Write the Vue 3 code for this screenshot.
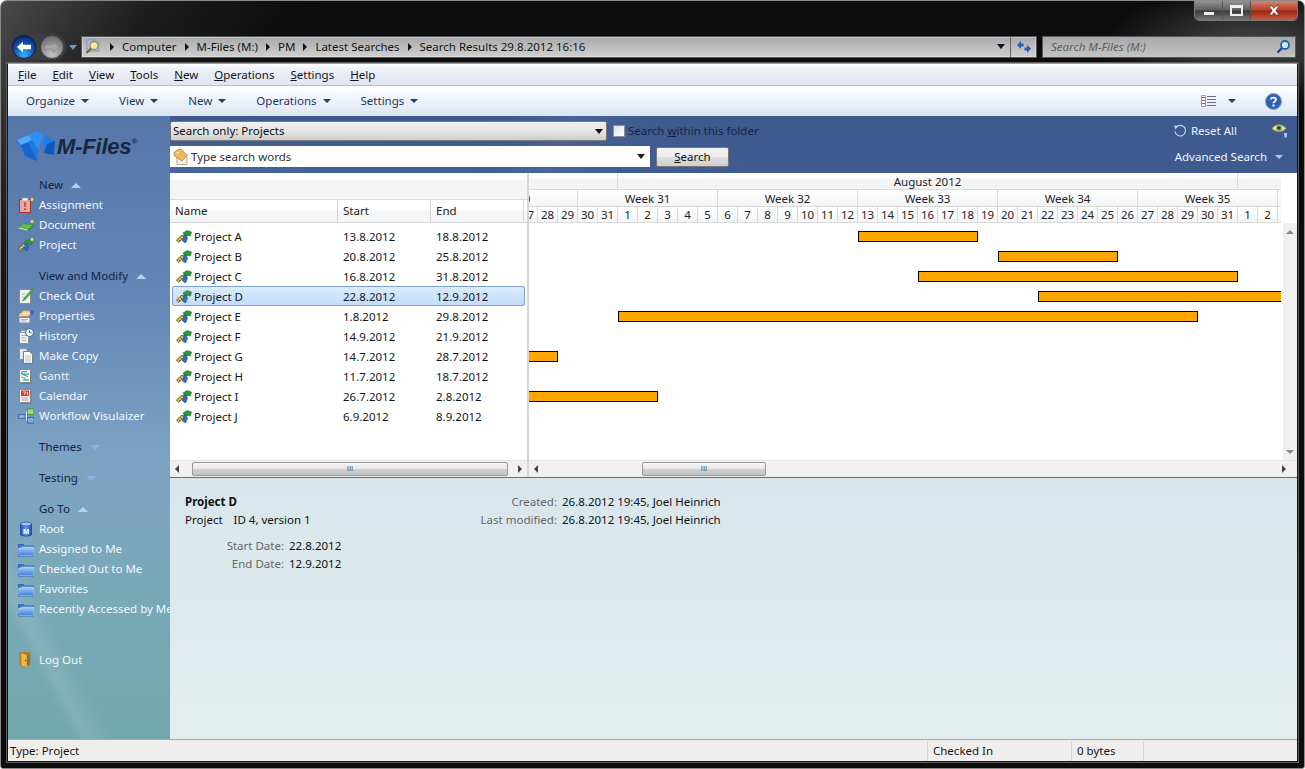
<template>
  <div class="frame">
    <svg class="defs" width="0" height="0">
      <defs>
        <linearGradient id="g-folder" x1="0" y1="0" x2="0" y2="1"><stop offset="0" stop-color="#a9cdf8" /><stop offset="1" stop-color="#3f80dc" /></linearGradient>
        <linearGradient id="g-db" x1="0" y1="0" x2="1" y2="0"><stop offset="0" stop-color="#1f55c8" /><stop offset=".5" stop-color="#6a9af0" /><stop offset="1" stop-color="#1c4cb8" /></linearGradient>
        <radialGradient id="g-back" cx=".5" cy=".85" r=".8"><stop offset="0" stop-color="#37b4f5" /><stop offset=".6" stop-color="#0d4fb0" /><stop offset="1" stop-color="#0a2e74" /></radialGradient>
        <radialGradient id="g-fwd" cx=".5" cy=".85" r=".8"><stop offset="0" stop-color="#c4c4c4" /><stop offset="1" stop-color="#6e6e6e" /></radialGradient>
      </defs>
      <symbol id="i-project" viewBox="0 0 16 16">
        <path d="M7 4 11 1.500 15.500 3 14.500 7 11 6.500 9 8Z" fill="#2f9a3a" stroke="#1a5f26" stroke-width=".5" />
        <path d="M5.500 7.500 10 5.500 11.500 9.500 9.500 14 6.500 12Z" fill="#2c6bd8" stroke="#173e8c" stroke-width=".5" />
        <path d="M.500 11 6 6 8 8.500 2.500 13.500Z" fill="#e9cd3c" stroke="#3c3c28" stroke-width=".7" />
        <path d="M2.500 10.500 4 12M4.500 8.500 6 10" stroke="#333" stroke-width=".8" />
      </symbol>
      <symbol id="i-assignment" viewBox="0 0 16 16">
        <rect x="1.500" y="2.500" width="11" height="13" fill="#e8a7a0" stroke="#a8322c" />
        <rect x="4" y="1" width="6" height="3" fill="#f4f4f4" stroke="#888" stroke-width=".5" />
        <path d="M6.200 5.500h1.600l-.3 4.500h-1zM6.200 11.500h1.600v1.600h-1.600z" fill="#c3201c" />
        <path d="M14 0l.8 1.700 1.200.3-1.200.9.300 1.600-1.100-1-1.400 1 .4-1.600-1-.9 1.400-.3z" fill="#ffe24a" />
      </symbol>
      <symbol id="i-document" viewBox="0 0 16 16">
        <path d="M.500 10 6 6.500 16 8 10 12.500Z" fill="#5cc04f" stroke="#2d7a2d" stroke-width=".5" />
        <path d="M.500 10 10 12.500 10 14 .500 11.500Z" fill="#eef5e8" stroke="#4b8d45" stroke-width=".5" />
        <path d="M10 12.500 16 8V9.500L10 14Z" fill="#2f8a35" />
        <path d="M14 2l.8 1.700 1.200.3-1.200.9.300 1.600-1.100-1-1.400 1 .4-1.600-1-.9 1.400-.3z" fill="#ffe24a" />
      </symbol>
      <symbol id="i-new-project" viewBox="0 0 16 16">
        <use href="#i-project" width="15" height="15" y="1" />
        <path d="M14 0l.8 1.700 1.200.3-1.200.9.300 1.600-1.100-1-1.400 1 .4-1.600-1-.9 1.400-.3z" fill="#ffe24a" />
      </symbol>
      <symbol id="i-checkout" viewBox="0 0 16 16">
        <path d="M1.500 1.500h11v14h-11z" fill="#f3f3ee" stroke="#8c8c8c" />
        <path d="M14.500 .5 6 10l-1.500 3 3-1.500L15.500 2Z" fill="#58b546" stroke="#2c7d2a" stroke-width=".5" />
        <path d="M4 6h3M4 9h1.500" stroke="#aaa" />
      </symbol>
      <symbol id="i-properties" viewBox="0 0 16 16">
        <path d="M1 9.500h11v5.500H1z" fill="#eef2f6" stroke="#7e8da0" />
        <path d="M3 11.500h7M3 13h5" stroke="#8da0b5" stroke-width=".8" />
        <path d="M1 6.500 6 2.500l6 .5 1 3-3 2.500H4.500L1 9Z" fill="#f2d9a0" stroke="#a48748" stroke-width=".6" />
        <path d="M12 2.500h3.500v4h-3z" fill="#2f66c8" />
      </symbol>
      <symbol id="i-history" viewBox="0 0 16 16">
        <path d="M1.500 4.500h9v11h-9z" fill="#f4f5f7" stroke="#8a8f98" />
        <path d="M3 2.500h6v2H3z" fill="#d8dce2" stroke="#8a8f98" stroke-width=".5" />
        <path d="M3.500 7.500h5M3.500 10h5M3.500 12.500h5" stroke="#a5a9b0" />
        <circle cx="11.500" cy="4.500" r="4" fill="#f6fbff" stroke="#3d638f" />
        <path d="M11.500 2.300v2.400h2" stroke="#3d638f" fill="none" />
      </symbol>
      <symbol id="i-copy" viewBox="0 0 16 16">
        <path d="M1.500 .5h6l2 2v9h-8z" fill="#e6e8eb" stroke="#8e9196" />
        <path d="M5.500 3.500h6l3 3v9h-9z" fill="#fbfbfb" stroke="#7a7d82" />
        <path d="M7 8h6M7 10h6M7 12h6M7 14h6" stroke="#a7a9ad" stroke-width=".7" />
      </symbol>
      <symbol id="i-gantt" viewBox="0 0 16 16">
        <path d="M1.500 1.500h11v13h-11z" fill="#f6f7f4" stroke="#8a8f8c" />
        <path d="M3 4 9 3.500M4 6.500 11 6M3 9l5 1.500M5 12h6" stroke="#5cb5a0" stroke-width="1.300" />
        <path d="M3 5.200 7 7.500 10 8.500" stroke="#3f7fd0" fill="none" />
        <path d="M13 3v12.500H3" stroke="#7b7e7b" fill="none" />
      </symbol>
      <symbol id="i-calendar" viewBox="0 0 16 16">
        <path d="M1.500 1.500h11v13h-11z" fill="#f5f2f2" stroke="#8d8a8a" />
        <rect x="3" y="2.500" width="8" height="5.500" fill="#d23b32" />
        <path d="M5 4h3L6 7M9.500 3.800v3.500" stroke="#fff" stroke-width=".8" fill="none" />
        <path d="M3.500 10h7M3.500 12h7" stroke="#bf9b9b" />
        <path d="M13 3v12.500H3" stroke="#7b7e7b" fill="none" />
      </symbol>
      <symbol id="i-workflow" viewBox="0 0 17 16">
        <rect x=".5" y="6.500" width="7" height="4" fill="#8bb4e8" stroke="#3e6ca8" />
        <rect x="10" y=".5" width="7" height="6" fill="#9ee06f" stroke="#4d8e36" />
        <rect x="10" y="9.500" width="7" height="6" fill="#7eaeea" stroke="#34639f" />
        <path d="M8 8.500h2M10 3.500H9v9h1" stroke="#e6eef8" fill="none" />
      </symbol>
      <symbol id="i-root" viewBox="0 0 16 16">
        <path d="M2.500 3v10.500c0 2 11 2 11 0V3Z" fill="url(#g-db)" stroke="#163c92" stroke-width=".7" />
        <ellipse cx="8" cy="3" rx="5.500" ry="2" fill="#a9c6f6" stroke="#163c92" stroke-width=".7" />
        <text x="8" y="12.500" text-anchor="middle" font-size="7.500" font-weight="700" fill="#fff" font-family="Liberation Sans, sans-serif">M</text>
      </symbol>
      <symbol id="i-folder" viewBox="0 0 16 16">
        <path d="M.500 3.500h5l1.500 1.500h8.500v10h-15Z" fill="#3a79d0" stroke="#24579f" stroke-width=".7" />
        <path d="M.500 7.500 5.500 6h10v8.500H1Z" fill="url(#g-folder)" stroke="#cfe2fb" stroke-width=".5" />
      </symbol>
      <symbol id="i-logout" viewBox="0 0 16 16">
        <path d="M2 .5h10v13H2z" fill="#9a7a3e" stroke="#a9842c" />
        <path d="M3 .5 9 3v13L3 13.500Z" fill="#f0b53a" stroke="#b57f18" stroke-width=".6" />
        <path d="M9.500 3.500h2v9h-2z" fill="#6a6f74" />
        <circle cx="7.500" cy="8.500" r=".7" fill="#6e4c10" />
      </symbol>
      <symbol id="i-tag" viewBox="0 0 16 16">
        <path d="M4 6h10v9.500H4z" fill="#f3f1ea" stroke="#8b887f" stroke-width=".7" />
        <path d="M1 3.500 5 .5h3.500L14 6.500 9 12 1.500 7Z" fill="#eeb95c" stroke="#a9782a" stroke-width=".7" />
        <circle cx="4.500" cy="3.700" r="1" fill="#fff6d8" />
      </symbol>
    </svg>

    <div class="chrome">
      <div class="caption">
        <span class="cap min"><i></i></span>
        <span class="cap max"><i></i></span>
        <span class="cap close">
          <svg width="14" height="11" viewBox="0 0 14 11"><path d="M2 1h3l2 2.500L9 1h3L8.800 5.500 12 10H9L7 7.500 5 10H2l3.200-4.500Z" fill="#fff" stroke="#5a2018" stroke-width=".6" /></svg>
        </span>
      </div>
      <div class="nav">
        <div class="nav-pill">
          <svg width="24" height="24" viewBox="0 0 24 24"><circle cx="12" cy="12" r="11.500" fill="url(#g-back)" stroke="#0a1c44" /><path d="M5 12l6-5.500v3.300h8v4.400h-8v3.300Z" fill="#fff" /></svg>
          <svg width="24" height="24" viewBox="0 0 24 24"><circle cx="12" cy="12" r="11.500" fill="url(#g-fwd)" stroke="#3f3f3f" /><path d="M19 12l-6-5.500v3.300H5v4.400h8v3.300Z" fill="#a6a6a6" stroke="#7a7a7a" stroke-width=".5" /></svg>
        </div>
        <span class="nav-drop"></span>
        <div class="address">
          <svg class="addr-icon" width="16" height="17" viewBox="0 0 16 17">
            <path d="M2 2h8l4 3v8H2z" fill="#9dc3ec" stroke="#5f8ec4" stroke-width=".7" />
            <circle cx="9" cy="7.500" r="4" fill="#f8e6a6" stroke="#b9851f" stroke-width="1.300" />
            <path d="M6 10.500 1.500 15" stroke="#8a5a14" stroke-width="2" />
          </svg>
          <template v-for="part in crumbs" :key="part">
            <span class="crumb-arrow"></span>
            <span class="crumb">{{ part }}</span>
          </template>
          <span class="addr-drop"></span>
          <span class="addr-refresh">
            <svg width="16" height="14" viewBox="0 0 16 14"><path d="M1 5l4-4v2.500h2.500V6.500H5V9Z" fill="#2a5fb0" /><path d="M15 8.500l-4 4.500V10.500H8.500V7.500H11V5Z" fill="#2a5fb0" /></svg>
          </span>
        </div>
        <div class="search-box">
          <span>Search M-Files (M:)</span>
          <svg width="15" height="15" viewBox="0 0 15 15"><circle cx="9" cy="6" r="4" fill="#d4e7f8" stroke="#1f62ae" stroke-width="1.800" /><path d="M6 9l-4.500 4.500" stroke="#1a4d8c" stroke-width="2.400" /></svg>
        </div>
      </div>
    </div>

    <div class="window">
      <div class="menu">
        <span v-for="m in menu" :key="m"><u>{{ m[0] }}</u>{{ m.slice(1) }}</span>
      </div>
      <div class="toolbar">
        <span v-for="t in tools" :key="t" class="tool">{{ t }}<i class="tri"></i></span>
        <svg class="view-icon" width="16" height="14" viewBox="0 0 16 14">
          <path d="M.5 1.500h4v11h-4z" fill="#fff" stroke="#8c9ab0" />
          <path d="M1 3.500h3M1 6.500h3M1 9.500h3" stroke="#c0524a" />
          <path d="M6 2.500h9M6 5.500h9M6 8.500h9M6 11.500h9" stroke="#66707e" />
        </svg>
        <i class="tri view-tri"></i>
        <svg class="help" width="17" height="17" viewBox="0 0 17 17">
          <circle cx="8.500" cy="8.500" r="8" fill="#2f62b4" stroke="#8b9db8" />
          <path d="M5.800 6.500C6 4 11 4 11 6.500c0 2-2.500 2-2.500 3.800" fill="none" stroke="#fff" stroke-width="1.700" />
          <rect x="7.500" y="11.500" width="2" height="2" fill="#fff" />
        </svg>
      </div>

      <div class="workspace">
        <aside class="sidebar">
          <div class="logo">
            <svg width="38" height="31" viewBox="0 0 38 31">
              <path d="M0 9 12 4 21 18 20 30 8 25Z" fill="#1f78e6" />
              <path d="M0 9 12 4 15 9 4 14Z" fill="#52aaf8" />
              <path d="M8 25 4 14 12 12 20 30Z" fill="#1765c8" />
              <path d="M12 4 20 0 27 4 21 18Z" fill="#2d90f0" />
              <path d="M20 0 38 10 37 24 27 22 27 4Z" fill="#1e7ce8" />
              <path d="M27 22 37 24 38 10 30 13Z" fill="#0f58b8" />
            </svg>
            <span class="logo-text">M-Files</span><span class="logo-reg">®</span>
          </div>
          <section v-for="group in nav" :key="group.title" class="group">
            <div class="group-title">{{ group.title }}<i :class="group.open ? 'up' : 'down'"></i></div>
            <div v-for="item in group.items" :key="item.label" class="side-item">
              <svg class="ic"><use :href="'#i-' + item.icon" /></svg>{{ item.label }}
            </div>
          </section>
          <div class="side-item logout"><svg class="ic"><use href="#i-logout" /></svg>Log Out</div>
        </aside>

        <div class="content">
          <div class="searchband">
            <div class="band-row">
              <div class="combo">Search only: Projects<i class="combo-tri"></i></div>
              <span class="check"></span>
              <span class="check-label">Search <u>w</u>ithin this folder</span>
              <span class="reset">
                <svg width="14" height="14" viewBox="0 0 14 14"><path d="M3 3.500a5.300 5.300 0 1 1-1 4" fill="none" stroke="#c5d3e8" stroke-width="1.200" /><path d="M1 1.500 5 2 2.500 5.500Z" fill="#c5d3e8" /></svg>
                Reset All
              </span>
              <svg class="eye" width="17" height="16" viewBox="0 0 17 16">
                <path d="M1 5.500C5 .5 11 .5 15 5.500 11 9.500 5 9.500 1 5.500Z" fill="#f2e3a8" stroke="#b89334" />
                <circle cx="8" cy="5" r="2.600" fill="#2e8c5c" />
                <circle cx="8" cy="5" r="1" fill="#123" />
                <path d="M13 10h3v4.500h-2.500Z" fill="#a7cdf4" />
              </svg>
            </div>
            <div class="band-row second">
              <div class="words"><svg class="ic"><use href="#i-tag" /></svg>Type search words<i class="words-tri"></i></div>
              <button class="go"><u>S</u>earch</button>
              <span class="advanced">Advanced Search<i class="adv-tri"></i></span>
            </div>
          </div>

          <div class="panes">
            <div class="list">
              <div class="list-top"></div>
              <div class="list-head">
                <span>Name</span><span>Start</span><span>End</span>
              </div>
              <div class="list-body">
                <div v-for="p in projects" :key="p.name" class="list-row" :class="{ selected: p.selected }">
                  <span class="name"><svg class="ic"><use href="#i-project" /></svg>{{ p.name }}</span>
                  <span>{{ p.start }}</span>
                  <span>{{ p.end }}</span>
                </div>
              </div>
              <div class="hscroll">
                <i class="arr-l"></i>
                <div class="thumb list-thumb"><b>III</b></div>
                <i class="arr-r"></i>
              </div>
            </div>

            <div class="gantt">
              <div class="gantt-main">
                <div class="gantt-view">
                  <div class="gantt-track">
                    <div class="g-row months">
                      <span v-for="m in months" :key="m.key" :style="{ width: m.width + 'px' }">{{ m.label }}</span>
                    </div>
                    <div class="g-row weeks">
                      <span v-for="w in weeks" :key="w">Week {{ w }}</span>
                    </div>
                    <div class="g-row days">
                      <span v-for="d in days" :key="d.key">{{ d.label }}</span>
                    </div>
                    <div class="g-body">
                      <div v-for="p in projects" :key="p.name" class="g-line">
                        <div class="bar" :style="barStyle(p)"></div>
                      </div>
                    </div>
                  </div>
                </div>
                <div class="vscroll">
                  <i class="arr-u"></i>
                  <i class="arr-d"></i>
                </div>
              </div>
              <div class="hscroll gantt-scroll">
                <i class="arr-l"></i>
                <div class="thumb gantt-thumb"><b>III</b></div>
                <i class="arr-r"></i>
              </div>
            </div>
          </div>

          <div class="details">
            <div class="detail-top">
              <div class="detail-name">
                <strong>Project D</strong>
                <div>Project<span class="version">ID 4, version 1</span></div>
              </div>
              <dl class="meta">
                <dt>Created:</dt><dd>26.8.2012 19:45, Joel Heinrich</dd>
                <dt>Last modified:</dt><dd>26.8.2012 19:45, Joel Heinrich</dd>
              </dl>
            </div>
            <dl class="props">
              <dt>Start Date:</dt><dd>22.8.2012</dd>
              <dt>End Date:</dt><dd>12.9.2012</dd>
            </dl>
          </div>
        </div>
      </div>

      <div class="status">
        <span class="st-type">Type: Project</span>
        <span class="st-state">Checked In</span>
        <span class="st-size">0 bytes</span>
        <span class="st-grip"></span>
      </div>
    </div>
  </div>
</template>

<script setup>
const crumbs = ['Computer', 'M-Files (M:)', 'PM', 'Latest Searches', 'Search Results 29.8.2012 16:16']
const menu = ['File', 'Edit', 'View', 'Tools', 'New', 'Operations', 'Settings', 'Help']
const tools = ['Organize', 'View', 'New', 'Operations', 'Settings']

const nav = [
  { title: 'New', open: true, items: [
    { label: 'Assignment', icon: 'assignment' },
    { label: 'Document', icon: 'document' },
    { label: 'Project', icon: 'new-project' }
  ] },
  { title: 'View and Modify', open: true, items: [
    { label: 'Check Out', icon: 'checkout' },
    { label: 'Properties', icon: 'properties' },
    { label: 'History', icon: 'history' },
    { label: 'Make Copy', icon: 'copy' },
    { label: 'Gantt', icon: 'gantt' },
    { label: 'Calendar', icon: 'calendar' },
    { label: 'Workflow Visulaizer', icon: 'workflow' }
  ] },
  { title: 'Themes', open: false, items: [] },
  { title: 'Testing', open: false, items: [] },
  { title: 'Go To', open: true, items: [
    { label: 'Root', icon: 'root' },
    { label: 'Assigned to Me', icon: 'folder' },
    { label: 'Checked Out to Me', icon: 'folder' },
    { label: 'Favorites', icon: 'folder' },
    { label: 'Recently Accessed by Me', icon: 'folder' }
  ] }
]

const projects = [
  { name: 'Project A', start: '13.8.2012', end: '18.8.2012' },
  { name: 'Project B', start: '20.8.2012', end: '25.8.2012' },
  { name: 'Project C', start: '16.8.2012', end: '31.8.2012' },
  { name: 'Project D', start: '22.8.2012', end: '12.9.2012', selected: true },
  { name: 'Project E', start: '1.8.2012', end: '29.8.2012' },
  { name: 'Project F', start: '14.9.2012', end: '21.9.2012' },
  { name: 'Project G', start: '14.7.2012', end: '28.7.2012' },
  { name: 'Project H', start: '11.7.2012', end: '18.7.2012' },
  { name: 'Project I', start: '26.7.2012', end: '2.8.2012' },
  { name: 'Project J', start: '6.9.2012', end: '8.9.2012' }
]

// the track starts on Monday 23 July, a day is 20px wide
const DAY = 20
const trackStart = Date.UTC(2012, 6, 23)

const dayIndex = (text) => {
  const [d, m, y] = text.split('.').map(Number)
  return Math.round((Date.UTC(y, m - 1, d) - trackStart) / 86400000)
}

const barStyle = (p) => {
  const from = dayIndex(p.start)
  const to = dayIndex(p.end) + 1
  return { marginLeft: from * DAY + 'px', width: (to - from) * DAY + 'px' }
}

const months = [
  { key: 'jul', label: '', width: 9 * DAY },
  { key: 'aug', label: 'August 2012', width: 31 * DAY },
  { key: 'sep', label: '', width: 30 * DAY }
]
const weeks = [30, 31, 32, 33, 34, 35, 36]
const days = Array.from({ length: 43 }, (_, i) => {
  const date = new Date(trackStart + i * 86400000)
  return { key: i, label: date.getUTCDate() }
})
</script>

<style>
html, body {
  margin: 0;
  background: #fff;
  overflow: hidden;
}
</style>

<style scoped>
.frame {
  position: relative;
  width: 1305px;
  height: 769px;
  box-sizing: border-box;
  border: 1px solid #8a8a8a;
  border-radius: 7px 7px 3px 3px;
  overflow: hidden;
  display: flex;
  flex-direction: column;
  color: #111;
  font: 11.5px/20px "Noto Sans", sans-serif;
  background:
    radial-gradient(150px 60px at 1250px 45px, rgba(120, 120, 120, .55), transparent),
    linear-gradient(125deg, #4a4a4a 0, #1c1c1c 130px, #0c0c0c 260px);
}
.defs {
  position: absolute;
}
.ic {
  width: 16px;
  height: 16px;
  flex: none;
}
i {
  display: block;
  flex: none;
}
u {
  text-decoration-thickness: 1px;
}

.chrome {
  height: 62px;
  flex: none;
}
.caption {
  position: absolute;
  top: -1px;
  right: 6px;
  display: flex;
  height: 20px;
  border: 1px solid #777;
  border-top: 0;
  border-radius: 0 0 5px 5px;
  overflow: hidden;
}
.cap {
  display: flex;
  align-items: center;
  justify-content: center;
  width: 27px;
  background: linear-gradient(#9a9a9a, #5d5d5d 50%, #3a3a3a 55%, #777);
  border-right: 1px solid #555;
}
.close {
  width: 46px;
  border-right: 0;
  background: linear-gradient(#d58b7c, #b8432e 50%, #9c2412 55%, #c85c45);
}
.min i {
  width: 10px;
  height: 3px;
  margin-top: 6px;
  background: #eee;
}
.max i {
  width: 9px;
  height: 6px;
  border: 2px solid #eee;
  border-top-width: 3px;
}

.nav {
  display: flex;
  align-items: center;
  padding: 33px 8px 0 9px;
  height: 25px;
}
.nav-pill {
  display: flex;
  gap: 4px;
  padding: 1px 2px;
  background: #3c3c44;
  border-radius: 14px;
}
.nav-drop {
  width: 0;
  height: 0;
  margin: 2px 4px 0 3px;
  border: 4px solid transparent;
  border-top: 5px solid #5aa0e0;
  border-bottom: 0;
}
.address {
  flex: 1;
  height: 20px;
  display: flex;
  align-items: center;
  padding-left: 3px;
  border: 1px solid #55585c;
  background: linear-gradient(#a9a9a9, #bdbdbd 50%, #cfcfcf);
  box-shadow: inset 0 0 0 1px rgba(255, 255, 255, .3);
  color: #141414;
}
.addr-icon {
  margin-right: 9px;
}
.crumb-arrow {
  width: 0;
  height: 0;
  margin: 0 8px 0 0;
  border: 4px solid transparent;
  border-left: 4px solid #111;
  border-right: 0;
}
.crumb {
  margin-right: 8px;
  white-space: nowrap;
}
.addr-drop {
  width: 0;
  height: 0;
  margin-left: auto;
  margin-right: 5px;
  border: 4px solid transparent;
  border-top: 5px solid #112;
  border-bottom: 0;
}
.addr-refresh {
  display: flex;
  align-items: center;
  justify-content: center;
  width: 25px;
  height: 20px;
  border-left: 1px solid #666;
}
.search-box {
  width: 240px;
  height: 20px;
  margin-left: 5px;
  padding: 0 4px 0 8px;
  display: flex;
  align-items: center;
  justify-content: space-between;
  border: 1px solid #55585c;
  background: linear-gradient(#a8a8a8, #c4c4c4);
  font-style: italic;
  color: #5e5e5e;
}

.window {
  flex: 1;
  margin: 0 6px 6px;
  display: flex;
  flex-direction: column;
  border: 1px solid #151515;
  border-top-color: #9c9c9c;
  outline: 1px solid #5c5c5c;
  min-height: 0;
}
.menu {
  height: 21px;
  flex: none;
  display: flex;
  gap: 16px;
  padding-left: 10px;
  align-items: center;
  background: linear-gradient(#fff, #eff2f9 20%, #dfe4f2);
  border-bottom: 1px solid #b8c0cd;
  color: #141414;
}
.toolbar {
  height: 30px;
  flex: none;
  display: flex;
  align-items: center;
  padding: 0 15px 0 18px;
  gap: 30px;
  background: linear-gradient(#fff, #eef3fa 45%, #dae4f2);
  color: #1e395b;
}
.tool {
  display: flex;
  align-items: center;
  gap: 6px;
}
.tri {
  width: 0;
  height: 0;
  border: 4px solid transparent;
  border-top: 4px solid #26405f;
  border-bottom: 0;
}
.view-icon {
  margin-left: auto;
}
.view-tri {
  margin-left: -19px;
}
.help {
  margin-left: -1px;
}

.workspace {
  flex: 1;
  min-height: 0;
  display: flex;
  background:
    linear-gradient(62deg, transparent 0, transparent 58px, rgba(255, 255, 255, .1) 70px, transparent 95px),
    linear-gradient(118deg, transparent 52%, rgba(255, 255, 255, .1) 58%, transparent 66%),
    linear-gradient(#5675a9 0, #6487b6 30%, #7da3c3 55%, #79a9b9 75%, #72a8ae 100%);
}
.sidebar {
  width: 162px;
  flex: none;
  color: #f2f6fb;
  display: flex;
  flex-direction: column;
}
.logo {
  height: 59px;
  flex: none;
  box-sizing: border-box;
  padding: 15px 0 0 9px;
  display: flex;
  align-items: flex-start;
}
.logo-text {
  margin: 3px 0 0 2px;
  font: italic 700 22px/26px "Liberation Sans", sans-serif;
  color: #18263f;
  letter-spacing: -.2px;
}
.logo-reg {
  font: 700 8px/10px "Liberation Sans", sans-serif;
  color: #18263f;
  margin-top: 6px;
}
.group {
  margin-bottom: 11px;
}
.group-title {
  display: flex;
  align-items: center;
  gap: 8px;
  height: 20px;
  padding-left: 31px;
  color: #12233f;
}
.group-title i {
  width: 0;
  height: 0;
  border: 5px solid transparent;
}
.group-title .up {
  border-top: 0;
  border-bottom: 5px solid #b7d2f2;
}
.group-title .down {
  border-bottom: 0;
  border-top: 5px solid #8ab0e6;
}
.side-item {
  display: flex;
  align-items: center;
  gap: 5px;
  height: 20px;
  padding-left: 10px;
  white-space: nowrap;
}
.logout {
  margin-top: 20px;
}

.content {
  flex: 1;
  min-width: 0;
  display: flex;
  flex-direction: column;
}
.searchband {
  height: 57px;
  flex: none;
  box-sizing: border-box;
  padding-top: 5px;
  background:
    linear-gradient(115deg, transparent 30%, rgba(255, 255, 255, .05) 35%, transparent 42%),
    linear-gradient(90deg, rgba(70, 100, 155, .2), #3f5a8f 55%),
    linear-gradient(#3e5689, #456599);
}
.band-row {
  display: flex;
  align-items: center;
  height: 20px;
}
.band-row.second {
  margin-top: 5px;
  height: 21px;
}
.combo {
  width: 437px;
  height: 20px;
  box-sizing: border-box;
  padding-left: 2px;
  display: flex;
  align-items: center;
  justify-content: space-between;
  background: linear-gradient(#f0f0f0, #e4e4e4 50%, #cfcfcf);
  border: 1px solid #777;
  border-radius: 2px;
  color: #0c0c0c;
}
.combo-tri {
  width: 0;
  height: 0;
  margin-right: 3px;
  border: 4px solid transparent;
  border-top: 5px solid #111;
  border-bottom: 0;
}
.check {
  width: 10px;
  height: 10px;
  margin-left: 6px;
  border: 1px solid #8e8f8f;
  background: linear-gradient(135deg, #e0e0e0, #fff);
}
.check-label {
  margin-left: 3px;
  color: #16233f;
}
.reset {
  margin-left: auto;
  display: flex;
  align-items: center;
  gap: 4px;
  color: #eef3fb;
}
.eye {
  margin: 0 9px 0 34px;
}
.words {
  width: 480px;
  height: 21px;
  box-sizing: border-box;
  padding-left: 3px;
  display: flex;
  align-items: center;
  gap: 2px;
  background: #fff;
  color: #333;
}
.words-tri {
  width: 0;
  height: 0;
  margin-left: auto;
  margin-right: 5px;
  border: 4px solid transparent;
  border-top: 5px solid #222;
  border-bottom: 0;
}
.go {
  width: 73px;
  height: 20px;
  margin: 1px 0 0 6px;
  padding: 0;
  font: inherit;
  line-height: 18px;
  color: #111;
  border: 1px solid #777;
  border-radius: 2px;
  background: linear-gradient(#f2f2f2, #ebebeb 50%, #ddd 52%, #cfcfcf);
}
.advanced {
  margin-left: auto;
  display: flex;
  align-items: center;
  gap: 8px;
  padding-right: 14px;
  color: #eef3fb;
}
.adv-tri {
  width: 0;
  height: 0;
  border: 4px solid transparent;
  border-top: 4px solid #a9c8ee;
  border-bottom: 0;
}

.panes {
  height: 304px;
  flex: none;
  display: flex;
  background: #fff;
  border-bottom: 1px solid #6b6b6b;
}
.list {
  width: 357px;
  flex: none;
  display: flex;
  flex-direction: column;
  border-right: 2px solid #d5d5d5;
}
.list-top {
  height: 26px;
  flex: none;
  border-bottom: 1px solid #dcdcdc;
  background: linear-gradient(#fff, #fff 25%, #f3f4f6 30%, #f3f4f6);
}
.list-head {
  height: 22px;
  flex: none;
  display: grid;
  grid-template-columns: 168px 93px 93px;
  border-bottom: 1px solid #d5d5d5;
  background: linear-gradient(#fff, #fff 45%, #f4f5f7 50%);
  color: #222;
}
.list-head span {
  padding-left: 5px;
  border-right: 1px solid #d5d5d5;
  line-height: 22px;
}
.list-body {
  flex: 1;
  padding: 3px 0 0 2px;
}
.list-row {
  width: 353px;
  height: 20px;
  box-sizing: border-box;
  display: grid;
  grid-template-columns: 166px 93px 1fr;
  align-items: center;
  border: 1px solid transparent;
  color: #161616;
}
.list-row > span {
  padding-left: 4px;
}
.list-row > .name {
  display: flex;
  align-items: center;
  gap: 2px;
  padding-left: 3px;
}
.list-row.selected {
  border-color: #7da2ce;
  border-radius: 2px;
  background: linear-gradient(#dcebfc, #c1dcfc);
}

.hscroll {
  height: 16px;
  flex: none;
  display: flex;
  align-items: center;
  background: #f0f0f0;
  border-top: 1px solid #e4e4e4;
}
.arr-l, .arr-r {
  width: 0;
  height: 0;
  border: 4px solid transparent;
}
.arr-l {
  margin: 0 5px;
  border-left: 0;
  border-right: 4px solid #444;
}
.arr-r {
  margin: 0 5px;
  border-right: 0;
  border-left: 4px solid #444;
}
.thumb {
  height: 14px;
  box-sizing: border-box;
  border: 1px solid #989898;
  border-radius: 2px;
  background: linear-gradient(#f6f6f6, #e6e6e6 50%, #cfcfcf 52%, #c4c4c4);
  text-align: center;
}
.thumb b {
  display: block;
  font: 400 8px/12px "Liberation Sans", sans-serif;
  color: #555;
}
.list-thumb {
  width: 319px;
  margin: 0 5px 0 8px;
}
.gantt-thumb {
  width: 124px;
  margin: 0 511px 0 99px;
}

.gantt {
  flex: 1;
  min-width: 0;
  display: flex;
  flex-direction: column;
}
.gantt-main {
  flex: 1;
  min-height: 0;
  display: flex;
}
.gantt-view {
  width: 752px;
  flex: none;
  overflow: hidden;
}
.gantt-track {
  margin-left: -91px;
  width: 1400px;
}
.g-row {
  display: flex;
  text-align: center;
  box-sizing: border-box;
  border-bottom: 1px solid #dadada;
  color: #222;
  white-space: nowrap;
}
.g-row span {
  flex: none;
  box-sizing: border-box;
  border-right: 1px solid #dadada;
  overflow: hidden;
}
.months {
  height: 17px;
  line-height: 17px;
  background: linear-gradient(#fff, #fff 30%, #f3f4f6 40%);
}
.weeks {
  height: 17px;
  line-height: 17px;
  background: linear-gradient(#fff, #f3f4f6);
}
.weeks span {
  width: 140px;
}
.days {
  height: 16px;
  line-height: 16px;
  background: linear-gradient(#fff, #f3f4f6);
}
.days span {
  width: 20px;
}
.g-body {
  padding-top: 8px;
  height: 230px;
  overflow: hidden;
}
.g-line {
  height: 20px;
}
.bar {
  height: 11px;
  box-sizing: border-box;
  background: #ffa500;
  border: 1px solid #000;
}
.vscroll {
  flex: 1;
  position: relative;
  margin: 50px 0 0 2px;
  background: #f0f0f0;
  display: flex;
  flex-direction: column;
  align-items: center;
  justify-content: space-between;
  padding: 7px 0 6px;
}
.arr-u, .arr-d {
  width: 0;
  height: 0;
  border: 4px solid transparent;
}
.arr-u {
  border-top: 0;
  border-bottom: 4px solid #888;
}
.arr-d {
  border-bottom: 0;
  border-top: 4px solid #888;
}

.details {
  flex: 1;
  min-height: 0;
  box-sizing: border-box;
  padding: 15px 15px 0;
  line-height: 18px;
  background: linear-gradient(#d8e6ec, #e3efee);
  color: #111;
}
.detail-top {
  display: flex;
}
.detail-name {
  width: 285px;
  flex: none;
}
.detail-name strong {
  display: block;
  font-weight: 700;
}
.version {
  margin-left: 11px;
}
dl {
  margin: 0;
  display: grid;
  column-gap: 5px;
}
dt {
  text-align: right;
  color: #666;
}
dd {
  margin: 0;
}
.meta {
  grid-template-columns: 87px auto;
}
.props {
  margin-top: 8px;
  grid-template-columns: 99px auto;
}

.status {
  height: 22px;
  flex: none;
  display: flex;
  align-items: center;
  background: #f0eded;
  border-top: 1px solid #a8a8a8;
  box-sizing: border-box;
  color: #161616;
}
.status span {
  height: 20px;
  box-sizing: border-box;
  padding-left: 5px;
  border-right: 1px solid #d4d2d2;
}
.st-type {
  width: 920px;
  padding-left: 2px !important;
}
.st-state {
  width: 144px;
}
.st-size {
  width: 72px;
}
.st-grip {
  flex: 1;
  border-right: 0 !important;
}
</style>
